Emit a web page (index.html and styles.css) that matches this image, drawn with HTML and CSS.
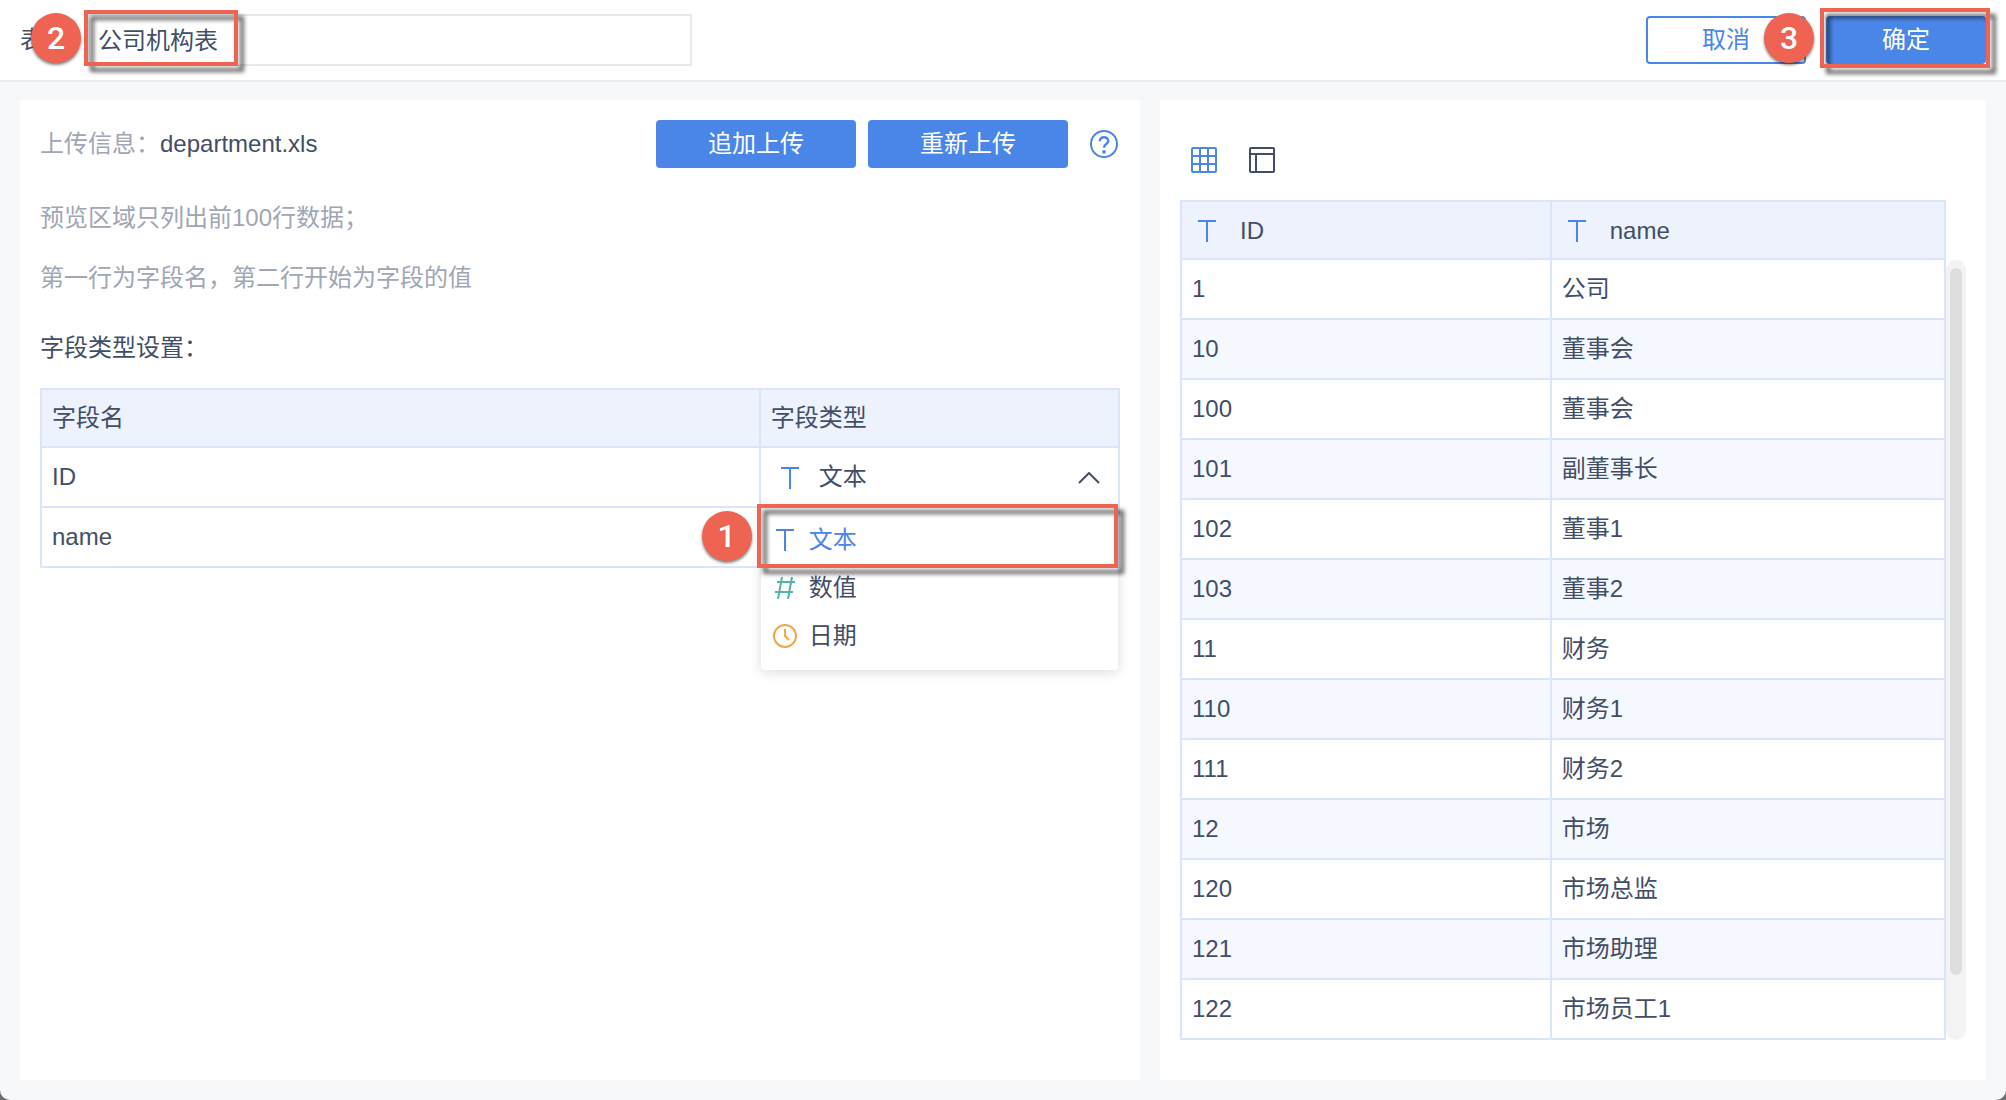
FILE: index.html
```html
<!DOCTYPE html>
<html lang="zh-CN">
<head>
    <meta charset="UTF-8">
    <meta name="viewport" content="width=device-width, initial-scale=1.0">
    <title>公司机构表</title>
    <link rel="stylesheet" href="styles.css">
</head>
<body>
    <!-- Shared icons -->
    <svg class="icon-defs" aria-hidden="true">
        <symbol id="icon-text" viewBox="0 0 18 22">
            <path d="M0 1h18M9 1v21" fill="none" stroke="currentColor" stroke-width="2"/>
        </symbol>
    </svg>

    <div class="app">
        <!-- Header -->
        <header class="header">
            <label class="name-label" for="tableName">表名</label>
            <div class="name-field">
                <input class="name-input" id="tableName" type="text" value="公司机构表">
                <span class="mark-box mark-box-name"></span>
                <span class="mark-dot mark-dot-name">2</span>
            </div>
            <div class="actions">
                <button class="btn btn-outline" type="button">取消</button>
                <div class="confirm">
                    <button class="btn btn-primary" type="button">确定</button>
                    <span class="mark-box mark-box-confirm"></span>
                    <span class="mark-dot mark-dot-confirm">3</span>
                </div>
            </div>
        </header>

        <main class="main">
            <!-- Upload info and field types -->
            <section class="panel">
                <div class="upload">
                    <p class="upload-info"><span class="muted">上传信息：</span>department.xls</p>
                    <button class="btn btn-primary btn-wide" type="button">追加上传</button>
                    <button class="btn btn-primary btn-wide" type="button">重新上传</button>
                    <button class="help" type="button" aria-label="帮助">
                        <svg width="28" height="28" viewBox="0 0 28 28" fill="none" stroke="currentColor">
                            <circle cx="14" cy="14" r="13" stroke-width="2"/>
                            <path d="M9.800 11.200C9.800 8.600 11.600 7.200 14 7.200s4.300 1.500 4.300 3.800c0 3.200-4.300 3-4.300 6.700" stroke-width="2.400"/>
                            <circle cx="14" cy="21.800" r="1.900" fill="currentColor" stroke="none"/>
                        </svg>
                    </button>
                </div>
                <p class="hint muted">预览区域只列出前100行数据；</p>
                <p class="hint muted">第一行为字段名，第二行开始为字段的值</p>
                <h2 class="subtitle">字段类型设置：</h2>

                <table class="table field-table">
                    <thead>
                        <tr><th>字段名</th><th>字段类型</th></tr>
                    </thead>
                    <tbody>
                        <tr>
                            <td>ID</td>
                            <td class="type-cell">
                                <div class="type-picker">
                                    <svg class="icon-type" width="18" height="22"><use href="#icon-text"/></svg>
                                    <select class="type-select" aria-label="ID 字段类型">
                                        <option>文本</option>
                                        <option>数值</option>
                                        <option>日期</option>
                                    </select>
                                    <svg class="caret" width="22" height="12" viewBox="0 0 22 12" fill="none" stroke="currentColor" stroke-width="2">
                                        <path d="M1 11L11 1l10 10"/>
                                    </svg>
                                    <div class="menu">
                                        <button class="menu-item active" type="button">
                                            <span class="menu-icon"><svg class="icon-type" width="18" height="22"><use href="#icon-text"/></svg></span>文本
                                        </button>
                                        <button class="menu-item" type="button">
                                            <span class="menu-icon">
                                                <svg class="icon-number" width="20" height="22" viewBox="0 0 20 22" fill="none" stroke="currentColor" stroke-width="2">
                                                    <path d="M2 5h18M0 15h18M7 0L3 22M17 0l-4 22"/>
                                                </svg>
                                            </span>数值
                                        </button>
                                        <button class="menu-item" type="button">
                                            <span class="menu-icon">
                                                <svg class="icon-date" width="24" height="24" viewBox="0 0 24 24" fill="none" stroke="currentColor" stroke-width="2">
                                                    <circle cx="12" cy="12" r="11"/>
                                                    <path d="M12 5v7l4 4"/>
                                                </svg>
                                            </span>日期
                                        </button>
                                    </div>
                                    <span class="mark-box mark-box-type"></span>
                                    <span class="mark-dot mark-dot-type">1</span>
                                </div>
                            </td>
                        </tr>
                        <tr><td>name</td><td></td></tr>
                    </tbody>
                </table>
            </section>

            <!-- Data preview -->
            <section class="panel">
                <div class="views">
                    <button class="view active" type="button" aria-label="表格">
                        <svg width="26" height="26" viewBox="0 0 26 26" fill="none" stroke="currentColor" stroke-width="2">
                            <rect x="1" y="1" width="24" height="24" rx="1"/>
                            <path d="M9 1v24M17 1v24M1 9h24M1 17h24"/>
                        </svg>
                    </button>
                    <button class="view" type="button" aria-label="布局">
                        <svg width="26" height="26" viewBox="0 0 26 26" fill="none" stroke="currentColor" stroke-width="2">
                            <rect x="1" y="1" width="24" height="24" rx="1"/>
                            <path d="M1 7h24M7 7v18"/>
                        </svg>
                    </button>
                </div>
                <div class="preview">
                    <table class="table data-table">
                        <thead>
                            <tr>
                                <th><span class="head"><svg class="icon-type" width="18" height="22"><use href="#icon-text"/></svg>ID</span></th>
                                <th><span class="head"><svg class="icon-type" width="18" height="22"><use href="#icon-text"/></svg>name</span></th>
                            </tr>
                        </thead>
                        <tbody>
                            <tr><td>1</td><td>公司</td></tr>
                            <tr><td>10</td><td>董事会</td></tr>
                            <tr><td>100</td><td>董事会</td></tr>
                            <tr><td>101</td><td>副董事长</td></tr>
                            <tr><td>102</td><td>董事1</td></tr>
                            <tr><td>103</td><td>董事2</td></tr>
                            <tr><td>11</td><td>财务</td></tr>
                            <tr><td>110</td><td>财务1</td></tr>
                            <tr><td>111</td><td>财务2</td></tr>
                            <tr><td>12</td><td>市场</td></tr>
                            <tr><td>120</td><td>市场总监</td></tr>
                            <tr><td>121</td><td>市场助理</td></tr>
                            <tr><td>122</td><td>市场员工1</td></tr>
                        </tbody>
                    </table>
                    <div class="scrollbar"><div class="thumb"></div></div>
                </div>
            </section>
        </main>
    </div>
</body>
</html>
```
FILE: styles.css
```css
* {
    box-sizing: border-box;
}

html {
    background: #6b6d70;
}

body {
    margin: 0;
    font-family: "Liberation Sans", "Noto Sans CJK SC", sans-serif;
    font-size: 24px;
    line-height: 36px;
    color: #424e67;
}

button,
input,
select {
    font: inherit;
    color: inherit;
}

button {
    padding: 0;
    border: none;
    background: none;
    cursor: pointer;
}

svg {
    display: block;
    flex: none;
}

p,
h2 {
    margin: 0;
}

.icon-defs {
    position: absolute;
    width: 0;
    height: 0;
}

.app {
    display: flex;
    flex-direction: column;
    min-height: 100vh;
    background: #f6f8fa;
    border-radius: 0 0 10px 10px;
}

.muted {
    color: #a0a6b3;
}

/* Header */
.header {
    display: flex;
    align-items: center;
    height: 82px;
    padding: 0 20px;
    background: white;
    border-bottom: 2px solid #e8eaed;
}

.name-label {
    margin-right: 20px;
}

.name-field {
    position: relative;
    flex: 0 1 604px;
}

.name-input {
    display: block;
    width: 100%;
    height: 52px;
    padding: 0 8px 4px;
    border: 2px solid #e8e9ee;
    background: white;
    outline: none;
}

.actions {
    display: flex;
    gap: 20px;
    margin-left: auto;
}

.confirm {
    position: relative;
}

.btn {
    width: 160px;
    height: 48px;
    border-radius: 4px;
}

.btn-wide {
    width: 200px;
}

.btn-outline {
    color: #4a86e8;
    border: 2px solid #4a86e8;
}

.btn-primary {
    color: white;
    background: #4a86e8;
}

/* Panels */
.main {
    flex: 1;
    display: grid;
    grid-template-columns: 1120fr 826fr;
    gap: 20px;
    padding: 18px 20px 20px;
}

.panel {
    padding: 20px;
    background: white;
}

.upload {
    display: flex;
    align-items: center;
    gap: 12px;
    margin-bottom: 32px;
}

.upload-info {
    flex: 1;
}

.help {
    padding: 0 2px;
    margin-left: 8px;
    color: #4a86e8;
}

.hint {
    margin-bottom: 24px;
}

.subtitle {
    margin: 34px 0 22px;
    font-size: 24px;
    font-weight: normal;
}

/* Tables */
.table {
    width: 100%;
    table-layout: fixed;
    border-collapse: separate;
    border-spacing: 0;
    border: solid #dae5f9;
    border-width: 2px 0 0 2px;
}

.table th,
.table td {
    height: 60px;
    padding: 0 10px;
    border: solid #dae5f9;
    border-width: 0 2px 2px 0;
    font-weight: normal;
    text-align: left;
}

.table th {
    height: 58px;
    background: #edf2fd;
}

.field-table th:first-child {
    width: calc(200% / 3);
}

.data-table th:first-child {
    width: 48.4%;
}

.data-table tbody tr:nth-child(even) {
    background: #f5f9ff;
}

.head {
    display: flex;
    align-items: center;
    gap: 24px;
    padding: 2px 0 0 6px;
}

.icon-type {
    color: #4a86e8;
}

.icon-number {
    color: #53b3a6;
}

.icon-date {
    color: #f0a74a;
}

/* Field type picker */
.table .type-cell {
    padding: 0;
}

.type-picker {
    position: relative;
    display: flex;
    align-items: center;
    height: 58px;
    padding: 2px 18px 0 20px;
}

.type-select {
    flex: 1;
    min-width: 0;
    height: 56px;
    margin-left: 20px;
    padding: 0 0 2px;
    border: none;
    background: none;
    appearance: none;
    outline: none;
}

.menu {
    position: absolute;
    z-index: 1;
    top: 100%;
    left: 0;
    right: 0;
    padding: 10px 0;
    background: white;
    border-radius: 4px;
    box-shadow: 0 2px 12px rgba(0, 0, 0, 0.15);
}

.menu-item {
    display: flex;
    align-items: center;
    gap: 12px;
    width: 100%;
    height: 48px;
    padding: 0 12px;
}

.menu-item.active {
    color: #4a86e8;
}

.menu-icon {
    display: flex;
    justify-content: center;
    width: 24px;
}

/* Preview */
.views {
    display: flex;
    gap: 32px;
    padding: 27px 11px;
}

.view.active {
    color: #4a86e8;
}

.preview {
    display: flex;
}

.data-table {
    flex: 1;
}

.scrollbar {
    width: 20px;
    margin-top: 60px;
    padding: 8px 4px;
    border-radius: 10px;
    background: #f3f3f3;
}

.thumb {
    height: 92.6%;
    border-radius: 6px;
    background: #dddee0;
}

/* Step marks */
.mark-box {
    position: absolute;
    z-index: 2;
    border: 4px solid #ee6352;
    filter: drop-shadow(6px 6px 2px rgba(0, 0, 0, 0.6));
    pointer-events: none;
}

.mark-dot {
    position: absolute;
    z-index: 2;
    width: 50px;
    height: 50px;
    border-radius: 50%;
    background: #ee6352;
    box-shadow: 0 2px 3px rgba(0, 0, 0, 0.5);
    color: white;
    font-family: Roboto, "Liberation Sans", sans-serif;
    font-size: 32px;
    font-weight: 500;
    line-height: 50px;
    text-align: center;
}

.mark-box-name {
    top: -4px;
    left: -4px;
    width: 154px;
    height: 56px;
}

.mark-dot-name {
    top: -1px;
    left: -57px;
}

.mark-box-confirm {
    top: -8px;
    left: -6px;
    right: -4px;
    height: 60px;
}

.mark-dot-confirm {
    top: -3px;
    left: -62px;
}

.mark-box-type {
    top: 56px;
    left: -4px;
    right: 0;
    height: 64px;
}

.mark-dot-type {
    top: 63px;
    left: -59px;
}
```
